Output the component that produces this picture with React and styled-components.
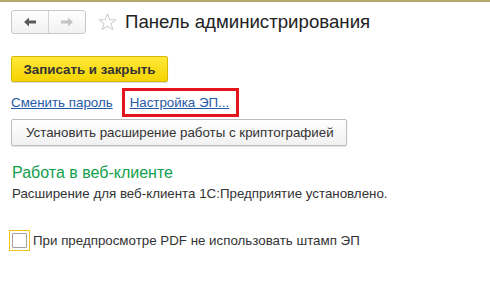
import React from "react";
import styled, { createGlobalStyle } from "styled-components";

const Global = createGlobalStyle`
  html, body { margin: 0; padding: 0; background: #fff; }
  body { font-family: "Liberation Sans", Arial, sans-serif; color: #333; }
`;

const Page = styled.div`
  width: 490px;
  height: 294px;
  box-sizing: border-box;
  border-top: 2px solid #b5a86f;
  padding: 8px 0 0 11px;
  display: flex;
  flex-direction: column;
  align-items: flex-start;
`;

const Header = styled.div`
  display: flex;
  align-items: center;
  height: 24px;
`;

const NavGroup = styled.div`
  display: flex;
  border: 1px solid #c9c9c9;
  border-radius: 3px;
  background: linear-gradient(#ffffff, #f1f1f1);
  height: 22px;
`;

const NavButton = styled.div`
  width: 36px;
  display: flex;
  align-items: center;
  justify-content: center;
  & + & { border-left: 1px solid #d2d2d2; }
`;

const Star = styled.svg`
  margin-left: 12px;
  display: block;
`;

const Title = styled.div`
  margin-left: 8px;
  font-size: 18.67px;
  color: #222;
  line-height: 24px;
`;

const YellowButton = styled.div`
  margin-top: 22px;
  width: 157px;
  height: 26px;
  box-sizing: border-box;
  border: 1px solid #d6b800;
  border-radius: 2px;
  background: linear-gradient(#ffe83a, #f5d400);
  box-shadow: 0 1px 1px rgba(0, 0, 0, 0.15);
  display: flex;
  align-items: center;
  justify-content: center;
  font-size: 13.33px;
  font-weight: bold;
  color: #333;
`;

const LinksRow = styled.div`
  margin-top: 6px;
  display: flex;
  align-items: center;
`;

const Link = styled.a`
  font-size: 13.33px;
  color: #2659a6;
  text-decoration: underline;
  cursor: pointer;
`;

const Highlight = styled.div`
  margin-left: 9px;
  width: 117px;
  height: 29px;
  box-sizing: border-box;
  border: 3px solid #e3141b;
  display: flex;
  align-items: center;
  padding-left: 5px;
`;

const GrayButton = styled.div`
  margin-top: 2px;
  width: 336px;
  height: 27px;
  box-sizing: border-box;
  border: 1px solid #bdbdbd;
  border-radius: 2px;
  background: linear-gradient(#ffffff, #f1f1f1);
  box-shadow: 0 1px 1px rgba(0, 0, 0, 0.12);
  display: flex;
  align-items: center;
  padding-left: 14px;
  font-size: 13.33px;
  color: #333;
`;

const SectionTitle = styled.div`
  margin-top: 17px;
  font-size: 16px;
  color: #12a04c;
  line-height: 20px;
  padding-left: 1px;
`;

const Text = styled.div`
  margin-top: 3px;
  font-size: 13.33px;
  line-height: 16px;
  color: #333;
  padding-left: 1px;
`;

const CheckRow = styled.label`
  margin-top: 28px;
  margin-left: -2px;
  display: flex;
  align-items: center;
  font-size: 13.33px;
  color: #333;
`;

const CheckFrame = styled.span`
  width: 21px;
  height: 21px;
  box-sizing: border-box;
  border: 1px solid #f2c21b;
  display: flex;
  align-items: center;
  justify-content: center;
`;

const CheckBox = styled.span`
  width: 15px;
  height: 15px;
  box-sizing: border-box;
  border: 1px solid #a0a0a0;
  border-radius: 1px;
  background: #fff;
`;

const CheckLabel = styled.span`
  margin-left: 3px;
`;

const Arrow = ({ color, dir }) => (
  <svg width="14" height="10" viewBox="0 0 14 10">
    <path
      d={dir === "left" ? "M1 5 L6 0.5 L6 3.5 L13 3.5 L13 6.5 L6 6.5 L6 9.5 Z" : "M13 5 L8 0.5 L8 3.5 L1 3.5 L1 6.5 L8 6.5 L8 9.5 Z"}
      fill={color}
    />
  </svg>
);

export default function App() {
  return (
    <>
      <Global />
      <Page>
        <Header>
          <NavGroup>
            <NavButton><Arrow dir="left" color="#5a5a5a" /></NavButton>
            <NavButton><Arrow dir="right" color="#c4c4c4" /></NavButton>
          </NavGroup>
          <Star width="19" height="18" viewBox="0 0 20 19">
            <path
              d="M10 1 L12.4 7 L18.8 7.2 L13.8 11.2 L15.6 17.6 L10 14 L4.4 17.6 L6.2 11.2 L1.2 7.2 L7.6 7 Z"
              fill="none"
              stroke="#cfcfcf"
              strokeWidth="1.1"
              strokeLinejoin="round"
            />
          </Star>
          <Title>Панель администрирования</Title>
        </Header>
        <YellowButton>Записать и закрыть</YellowButton>
        <LinksRow>
          <Link>Сменить пароль</Link>
          <Highlight>
            <Link>Настройка ЭП...</Link>
          </Highlight>
        </LinksRow>
        <GrayButton>Установить расширение работы с криптографией</GrayButton>
        <SectionTitle>Работа в веб-клиенте</SectionTitle>
        <Text>Расширение для веб-клиента 1С:Предприятие установлено.</Text>
        <CheckRow>
          <CheckFrame><CheckBox /></CheckFrame>
          <CheckLabel>При предпросмотре PDF не использовать штамп ЭП</CheckLabel>
        </CheckRow>
      </Page>
    </>
  );
}
